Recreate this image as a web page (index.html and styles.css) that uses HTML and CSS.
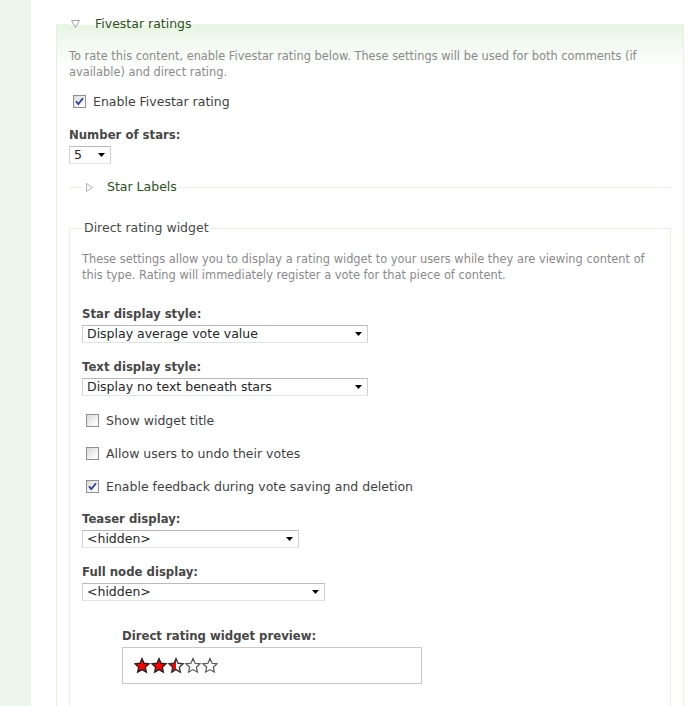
FILE: index.html
```html
<!DOCTYPE html>
<html lang="en">
<head>
<meta charset="utf-8">
<title>Fivestar ratings</title>
<link rel="stylesheet" href="styles.css">
</head>
<body>
<div class="page">
  <div class="strip"></div>
  <main class="main">
    <fieldset class="fs outer">
      <legend class="lg green"><svg class="tri tri-down" width="10" height="8" viewBox="0 0 10 8"><polygon points="0.5,0.5 8.5,0.5 4.5,7.5" fill="none" stroke="#a4a4a4" stroke-width="1"/></svg><span>Fivestar ratings</span></legend>
      <p class="desc">To rate this content, enable Fivestar rating below. These settings will be used for both comments (if available) and direct rating.</p>
      <div class="check first">
        <span class="box"><svg width="11" height="11" viewBox="0 0 11 11"><path d="M2 5.2 L4.3 8 L9 2.2" fill="none" stroke="#2a3f9a" stroke-width="1.8"/></svg></span>
        <span>Enable Fivestar rating</span>
      </div>
      <div class="item stars-count">
        <div class="label">Number of stars:</div>
        <div class="select w-num"><span>5</span><svg class="arrow" width="7" height="4" viewBox="0 0 7 4"><polygon points="0,0 7,0 3.5,4" fill="#000"/></svg></div>
      </div>
      <fieldset class="fs collapsed">
        <legend class="lg green"><svg class="tri tri-right" width="9" height="9" viewBox="0 0 9 9"><polygon points="2.5,0.5 8.5,4.5 2.5,8.5" fill="none" stroke="#b0b0b0" stroke-width="1"/></svg><span>Star Labels</span></legend>
      </fieldset>
      <fieldset class="fs inner">
        <legend class="lg plain">Direct rating widget</legend>
        <p class="desc">These settings allow you to display a rating widget to your users while they are viewing content of this type. Rating will immediately register a vote for that piece of content.</p>
        <div class="item first-item">
          <div class="label">Star display style:</div>
          <div class="select w-wide"><span>Display average vote value</span><svg class="arrow" width="7" height="4" viewBox="0 0 7 4"><polygon points="0,0 7,0 3.5,4" fill="#000"/></svg></div>
        </div>
        <div class="item">
          <div class="label">Text display style:</div>
          <div class="select w-wide"><span>Display no text beneath stars</span><svg class="arrow" width="7" height="4" viewBox="0 0 7 4"><polygon points="0,0 7,0 3.5,4" fill="#000"/></svg></div>
        </div>
        <div class="check">
          <span class="box"></span>
          <span>Show widget title</span>
        </div>
        <div class="check">
          <span class="box"></span>
          <span>Allow users to undo their votes</span>
        </div>
        <div class="check">
          <span class="box"><svg width="11" height="11" viewBox="0 0 11 11"><path d="M2 5.2 L4.3 8 L9 2.2" fill="none" stroke="#2a3f9a" stroke-width="1.8"/></svg></span>
          <span>Enable feedback during vote saving and deletion</span>
        </div>
        <div class="item">
          <div class="label">Teaser display:</div>
          <div class="select w-teaser"><span>&lt;hidden&gt;</span><svg class="arrow" width="7" height="4" viewBox="0 0 7 4"><polygon points="0,0 7,0 3.5,4" fill="#000"/></svg></div>
        </div>
        <div class="item">
          <div class="label">Full node display:</div>
          <div class="select w-full"><span>&lt;hidden&gt;</span><svg class="arrow" width="7" height="4" viewBox="0 0 7 4"><polygon points="0,0 7,0 3.5,4" fill="#000"/></svg></div>
        </div>
        <div class="item preview">
          <div class="label">Direct rating widget preview:</div>
          <div class="preview-box">
            <svg class="stars" width="84" height="17" viewBox="0 0 84 17">
              <defs>
                <path id="star" d="M8 1.1 L10.06 5.77 L15.13 6.28 L11.33 9.68 L12.41 14.67 L8 12.1 L3.59 14.67 L4.67 9.68 L0.87 6.28 L5.94 5.77 Z"/>
                <linearGradient id="half" x1="0" x2="1" y1="0" y2="0">
                  <stop offset="0.5" stop-color="#ff0000"/>
                  <stop offset="0.5" stop-color="#ffffff"/>
                </linearGradient>
              </defs>
              <use href="#star" x="0" y="0.5" fill="#ff0000" stroke="#222" stroke-width="1.3"/>
              <use href="#star" x="17" y="0.5" fill="#ff0000" stroke="#222" stroke-width="1.3"/>
              <use href="#star" x="34" y="0.5" fill="url(#half)" stroke="#333" stroke-width="1.3"/>
              <use href="#star" x="51" y="0.5" fill="#fff" stroke="#555" stroke-width="1.2"/>
              <use href="#star" x="68" y="0.5" fill="#fff" stroke="#555" stroke-width="1.2"/>
            </svg>
          </div>
        </div>
      </fieldset>
    </fieldset>
  </main>
</div>
</body>
</html>
```

FILE: styles.css
```css
* {
  box-sizing: border-box;
}

html, body {
  margin: 0;
  padding: 0;
  background: #ffffff;
}

body {
  font-family: "DejaVu Sans", Verdana, sans-serif;
  font-size: 12.5px;
  color: #494949;
  overflow: hidden;
}

.page {
  display: flex;
  min-height: 706px;
}

.strip {
  width: 31px;
  flex: none;
  background: #edf6ec;
}

.main {
  flex: 1;
  min-width: 0;
  padding: 15px 16px 0 25px;
}

fieldset.fs {
  margin: 0;
  min-width: 0;
  border: 1px solid #e3f1df;
  padding: 15px 12px 20px;
}

fieldset.outer {
  background: linear-gradient(#e7f5e3 0px, #f6fbf5 28px, #ffffff 44px);
  border-top-color: #e7f5e3;
  padding-bottom: 60px;
}

legend.lg {
  padding: 0 2px;
  height: 18px;
  line-height: 18px;
  white-space: nowrap;
}

.green {
  color: #2a5219;
}

.plain {
  color: #494949;
}

.tri {
  display: inline-block;
  vertical-align: -1px;
  margin-right: 14px;
}

.tri-down {
  vertical-align: 0px;
}

.desc {
  margin: 0;
  font-size: 11.4px;
  line-height: 16px;
  color: #8a8a8a;
}

.check {
  display: flex;
  align-items: center;
  height: 17px;
  line-height: 17px;
  margin-top: 16px;
  color: #3f3f3f;
}

.check.first {
  margin-top: 13px;
}

.box {
  width: 13px;
  height: 13px;
  flex: none;
  margin: 0 7px 0 4px;
  border: 1px solid #8f9090;
  background: linear-gradient(135deg, #d9d9d9, #f7f7f7 70%, #ffffff);
  display: flex;
  align-items: center;
  justify-content: center;
}

.box svg {
  display: block;
}

.item {
  margin-top: 16px;
}

.item.stars-count {
  margin-top: 17px;
}

.item.first-item {
  margin-top: 23px;
}

.label {
  font-weight: bold;
  font-size: 11.7px;
  line-height: 16px;
  margin-bottom: 3px;
  color: #474747;
}

.select {
  height: 18px;
  border: 1px solid #d0d0d0;
  border-top-color: #b9b9b9;
  border-bottom-color: #dfe5e7;
  background: #ffffff;
  display: flex;
  align-items: center;
  justify-content: space-between;
  padding: 0 5px 0 4px;
  line-height: 16px;
  color: #262626;
}

.arrow {
  display: block;
  flex: none;
}

.w-num {
  width: 42px;
}

.w-wide {
  width: 286px;
}

.w-teaser {
  width: 217px;
}

.w-full {
  width: 243px;
}

fieldset.fs.collapsed {
  border-width: 1px 0 0 0;
  border-style: solid;
  border-color: #e6f3e3;
  padding: 0 0 0 13px;
  margin-top: 14px;
}

fieldset.fs.inner {
  margin-top: 23px;
  padding-top: 14px;
  padding-bottom: 40px;
  border-color: #e6f3e3;
}

.item.preview {
  margin-top: 27px;
  margin-left: 40px;
}

.preview-box {
  width: 300px;
  height: 37px;
  border: 1px solid #c9c9c9;
  padding: 0 0 0 11px;
  display: flex;
  align-items: center;
}

.stars {
  display: block;
}
```
